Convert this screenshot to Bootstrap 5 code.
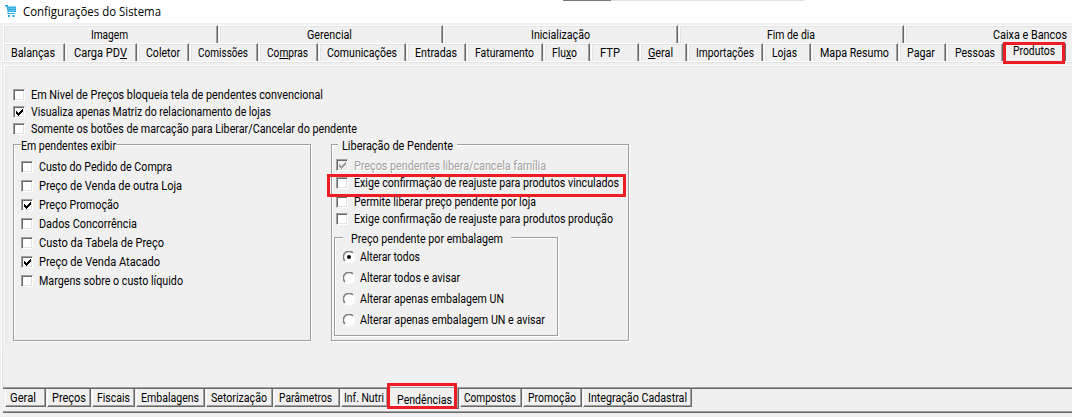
<!DOCTYPE html>
<html lang="pt-BR">
<head>
<meta charset="utf-8">
<meta name="viewport" content="width=device-width, initial-scale=1">
<title>Configurações do Sistema</title>
<link href="https://cdn.jsdelivr.net/npm/bootstrap@5.3.0/dist/css/bootstrap.min.css" rel="stylesheet">
<style>
  body{width:1072px;height:417px;overflow:hidden;background:#f0f0f0;color:#000;font:12px/17px Roboto,sans-serif}
  .titlebar{height:23px;background:#fff;font:12px/24px "Open Sans",sans-serif;padding-left:5px}
  .titlebar::before{content:"";position:absolute;top:0;left:563px;width:48px;height:1px;background:#7d7779}
  .titlebar::after{content:"";position:absolute;top:0;left:611px;width:193px;height:1px;background:#e3e3e3}
  .titlebar svg{width:11px;height:12px;margin:5px 7px 0 0;flex:none}
  .fit{display:inline-block;white-space:pre;transform-origin:0 50%;flex:none}
  .upper{padding-left:3px;height:18px}
  .areas{margin-top:2px}
  .ttab{height:18px;border-top:1px solid #fff;border-left:1px solid #fff;border-right:1px solid #696969;box-shadow:inset -1px 0 #a0a0a0,inset 1px 1px #e3e3e3;flex:none;margin-right:1px;line-height:18px;white-space:nowrap}
  .areas .ttab{line-height:19px}
  .ttab.sel{line-height:15px}
  .page{margin-left:1px;height:326px;border-top:1px solid #fff;border-left:1px solid #fff;box-shadow:inset 1px 1px #e3e3e3;padding:3px 0 0 2px}
  .sheet{height:281px;border-top:1px solid #fff;border-left:1px solid #fff;box-shadow:inset 1px 1px #e3e3e3;padding:21px 0 0 8px}
  .opt{height:17px;line-height:17px;white-space:nowrap}
  .box{flex:none;width:12px;height:12px;background:#fff;border:1px solid;border-color:#a0a0a0 #fff #fff #a0a0a0;box-shadow:inset 1px 1px #696969,inset -1px -1px #e3e3e3;margin:2px 6px 0 0}
  .box svg{display:block;width:10px;height:10px}
  .off .box{background:#f0f0f0}
  .off .fit{color:#a0a0a0;text-shadow:1px 1px #fff}
  .groups{margin-top:6px}
  .group{border:1px solid #a0a0a0;box-shadow:1px 1px #fff,inset 1px 1px #fff;position:relative}
  .legend{position:absolute;background:#f0f0f0;line-height:16px;height:15px;top:-7px;white-space:nowrap}
  .g1{width:298px;height:197px;padding:13px 0 0 7px}
  .g1 .opt{height:19px;line-height:19px}
  .g1 .box{margin-top:3px}
  .g1 .legend{left:7px}
  .g2{width:298px;height:197px;margin-left:20px;padding:12px 0 0 4px}
  .g2 .legend{left:6px}
  #release .opt:nth-child(1){height:18px;line-height:18px}
  #release .opt:nth-child(2){height:19px}
  .g3{width:224px;height:99px;margin:9px 0 0 -2px;padding:9px 0 0 8px}
  .g3 .legend{left:8px;padding:0 8px}
  .g3 .opt{height:21px;line-height:21px}
  .g3 svg{width:12px;height:12px;margin:4px 5px 0 0;flex:none}
  .mark-red{position:absolute;border:3px solid #ee1c25;pointer-events:none}
  .mark-module{left:1003px;top:42px;width:62px;height:22px}
  .mark-option{left:327px;top:174px;width:299px;height:23px}
  .mark-page{left:387px;top:383px;width:70px;height:26px}
  .lower{border-top:1px solid #a0a0a0;box-shadow:inset 0 1px #696969;margin-left:3px;height:24px;padding:1px 0 0 2px}
  .btab{height:18px;border-right:1px solid #696969;border-bottom:1px solid #696969;border-left:1px solid #fff;box-shadow:inset -1px -1px #a0a0a0;flex:none;margin-right:1px;line-height:19px;white-space:nowrap}
  .btab.sel{height:21px;line-height:25px;background:#f0f0f0;margin-top:-1px}
  .foot{margin-left:3px;height:2px;border-top:1px solid #a0a0a0;border-bottom:1px solid #696969}
</style>
</head>
<body>
<header class="titlebar d-flex position-relative">
  <svg viewBox="0 0 11 12"><path fill="#29a9e1" d="M0 0h3v1.500h8V7H3.500V8H10v1H2.500V6L1.500 1.500H0zM3 10h2v2H3zM7.500 10h2v2h-2z"/><path d="M3 3.500h8M3 5.500h8M5 2v5M7 2v5M9 2v5" stroke="#a5dcf4" stroke-width=".35"/></svg>
  <span class="fit" data-w="138">Configurações do Sistema</span>
</header>
<nav class="upper areas d-flex" id="areas"></nav>
<nav class="upper d-flex" id="modules"></nav>
<main class="page"><div class="sheet">
  <div class="d-flex flex-column" id="general"></div>
  <div class="d-flex groups">
    <section class="group g1"><div class="legend"><span class="fit" data-w="95">Em pendentes exibir</span></div><div id="show"></div></section>
    <section class="group g2"><div class="legend px-1"><span class="fit" data-w="111">Liberação de Pendente</span></div><div id="release"></div>
      <section class="group g3"><div class="legend"><span class="fit" data-w="152">Preço pendente por embalagem</span></div><div id="pack"></div></section>
    </section>
  </div>
</div></main>
<nav class="lower d-flex" id="pages"></nav>
<div class="foot"></div>
<div class="mark-red mark-module"></div>
<div class="mark-red mark-option"></div>
<div class="mark-red mark-page"></div>
<script src="https://cdn.jsdelivr.net/npm/bootstrap@5.3.0/dist/js/bootstrap.bundle.min.js"></script>
<script>
const fit=(t,w)=>`<span class="fit" data-w="${w}">${t}</span>`;
// Each tab: label, left edge, right edge, text start, text width
const tabs=(id,cls,rows)=>document.getElementById(id).innerHTML=rows.map(([t,l,r,x,w,c=''])=>
  `<div class="${cls} ${c}" style="width:${r-l}px;padding-left:${x-l-1}px">${fit(t,w)}</div>`).join('');
tabs('areas','ttab',[['Imagem',3,218,91,37],['Gerencial',219,443,307,45],['Inicialização',444,678,531,59],['Fim de dia',679,904,767,48],['Caixa e Bancos',905,1090,993,74]]);
tabs('modules','ttab',[['Balanças',3,65,11,44],['Carga PD<u>V</u>',66,137,74,53],['Coletor',138,189,146,34],['Comissões',190,258,198,50],['Co<u>m</u>pras',259,318,267,41],['Comunicações',319,406,327,70],['Entradas',407,466,415,42],['Faturamento',467,543,475,59],['Flu<u>x</u>o',544,590,552,25],['FTP',591,639,600,20],['<u>G</u>eral',640,687,648,25],['Importações',688,763,696,58],['Lojas',764,811,772,25],['Mapa Resumo',812,898,820,69],['Pagar',899,946,907,28],['Pessoas',947,1003,955,40],['Produtos',1004,1066,1013,42,'sel']]);
tabs('pages','btab',[['Geral',5,46,10,26],['Preços',47,91,52,34],['Fiscais',92,135,97,33],['Embalagens',136,205,141,58],['Setorização',206,273,211,56],['Parâmetros',274,340,279,53],['Inf. Nutri',341,388,344,40],['Pendências',389,459,397,55,'sel'],['Compostos',460,522,464,52],['Promoção',523,582,528,48],['Integração Cadastral',583,692,588,99]]);
const tick=c=>`<svg viewBox="0 0 10 10"><path fill="${c}" d="M2 4h1v1h1v1h1V5h1V4h1V3h1V2h1v3H8v1H7v1H6v1H5v1H4V8H3V7H2z"/></svg>`;
const checks=(id,rows)=>document.getElementById(id).innerHTML=rows.map(([t,w,s=''])=>
  `<div class="opt d-flex align-items-start ${s}"><span class="box">${s?tick(s=='off'?'#a0a0a0':'#000'):''}</span>${fit(t,w)}</div>`).join('');
checks('general',[['Em Nivel de Preços bloqueia tela de pendentes convencional',292],['Visualiza apenas Matriz do relacionamento de lojas',240,'on'],['Somente os botões de marcação para Liberar/Cancelar do pendente',326]]);
checks('show',[['Custo do Pedido de Compra',133],['Preço de Venda de outra Loja',143],['Preço Promoção',80,'on'],['Dados Concorrência',98],['Custo da Tabela de Preço',125],['Preço de Venda Atacado',121,'on'],['Margens sobre o custo líquido',144]]);
checks('release',[['Preços pendentes libera/cancela família',192,'off'],['Exige confirmação de reajuste para produtos vinculados',265],['Permite liberar preço pendente por loja',182],['Exige confirmação de reajuste para produtos produção',259]]);
document.getElementById('pack').innerHTML=[['Alterar todos',60,1],['Alterar todos e avisar',100],['Alterar apenas embalagem UN',144],['Alterar apenas embalagem UN e avisar',185]].map(([t,w,on])=>
 `<div class="opt d-flex align-items-start"><svg viewBox="0 0 12 12"><circle cx="6" cy="6" r="5" fill="#fff"/><path d="M2 10A5.500 5.500 0 0 1 10 2" fill="none" stroke="#808080" stroke-width="1.6"/><path d="M10 2A5.500 5.500 0 0 1 2 10" fill="none" stroke="#fff" stroke-width="1.4"/>${on?'<circle cx="6" cy="6" r="2" fill="#000"/>':''}</svg>${fit(t,w)}</div>`).join('');
document.querySelectorAll('.fit').forEach(e=>{
  const w=+e.dataset.w, n=e.getBoundingClientRect().width;
  e.style.transform=`scaleX(${(w/n).toFixed(4)})`;
  e.style.width=(e.closest('.legend')?w:n)+'px';
});
</script>
</body>
</html>
